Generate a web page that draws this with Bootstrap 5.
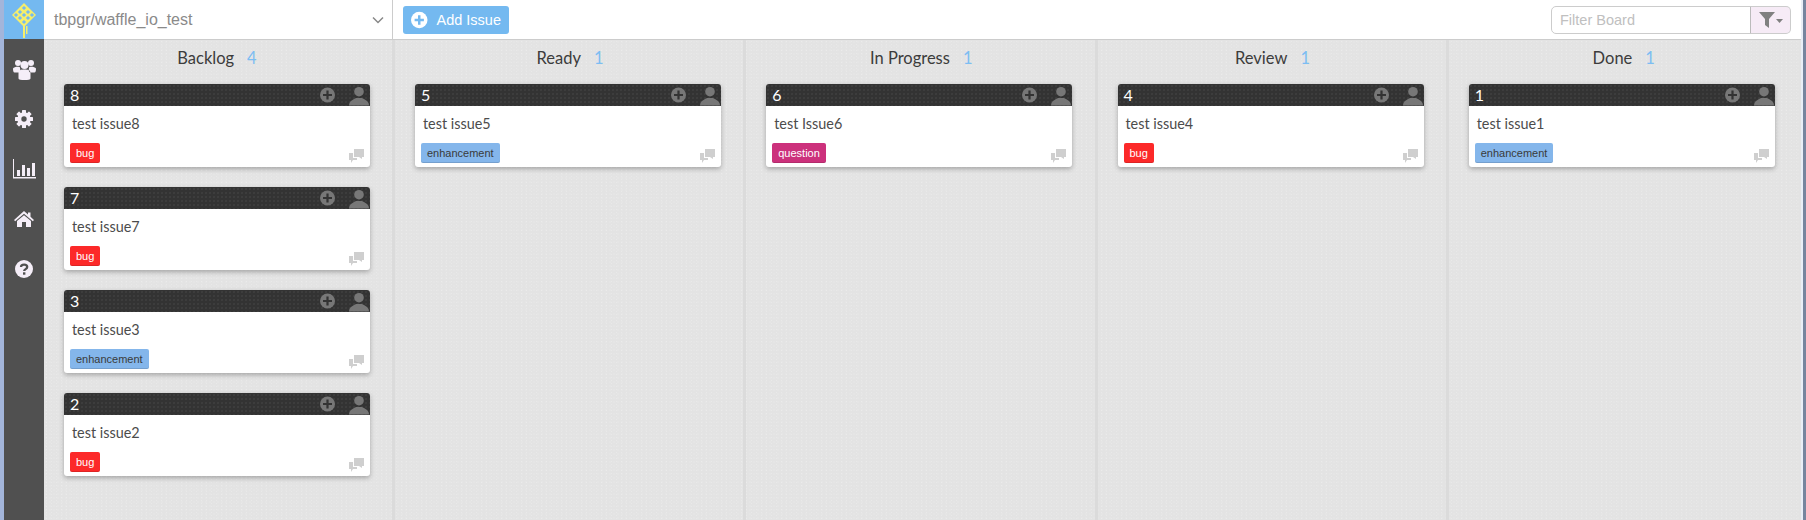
<!DOCTYPE html>
<html lang="en">
<head>
<meta charset="utf-8">
<title>Waffle board</title>
<link rel="stylesheet" href="https://cdn.jsdelivr.net/npm/bootstrap@5.3.0/dist/css/bootstrap.min.css">
<style>
html,body{height:100%;margin:0;overflow:hidden;background:#fff}
body{font-family:"Lato","Liberation Sans",sans-serif;color:#444}
.app-frame{height:520px;width:1806px;border-left:4px solid #a3b5da;border-right:3px solid #76859f;padding-right:2px;background:#e9eef7}
.side-rail{width:40px;background:#505050;flex:none}
.logo-cell{height:39px;background:#74b9f0;margin-bottom:5px}
.rail-item{height:50px;color:#f5eef8}
.top-bar{height:40px;border-bottom:1px solid #ccc;background:#fff}
.repo-pick{width:349px;height:39px;border-right:1px solid #ccc;padding:0 8px 0 10px;font:16px "Liberation Sans",sans-serif;color:#8a8a8a}
.add-btn{height:28px;width:106px;margin-left:10px;padding:0 8px 0 8px;background:#74b9f0;border:0;border-radius:3px;color:#fff;font:14.5px "Liberation Sans",sans-serif;gap:9px;white-space:nowrap}
.add-btn:hover{background:#74b9f0;color:#fff}
.filter-box{width:240px;height:28px;margin-right:10px;flex-wrap:nowrap}
.filter-box .form-control{height:28px;min-height:0;padding:0 6px 0 8px;font:14.5px "Liberation Sans",sans-serif;border:1px solid #ccc;border-radius:5px 0 0 5px;color:#555}
.filter-box .form-control::placeholder{color:#c0c0c0}
.filter-btn{width:41px;height:28px;padding:0;flex:none;background:#f6ebf6;border:1px solid #ccc;border-left-color:#bbb;border-radius:0 5px 5px 0}
.board-area{background-color:#e3e3e3;background-image:radial-gradient(rgba(255,255,255,.28) .5px,transparent .8px),radial-gradient(rgba(255,255,255,.2) .5px,transparent .8px);background-size:4px 4px,5px 3px}
.lane{width:351.25px;flex:none;border-right:3px solid #dbdbdb;padding:0 0 0 20px}
.lane-first{width:351px}
.lane-last{flex:1;border-right:0}
.lane-head{height:44px;font-size:16.5px;color:#3c3c3c;gap:13px;width:306px;padding-bottom:7px}
.lane:not(.lane-first) .lane-head{padding-left:4px}
.lane-count{color:#7cbdf2}
.issue-tile{width:306px;height:83px;margin-bottom:20px;background:#fff;border-radius:3px;box-shadow:0 2px 5px rgba(0,0,0,.28)}
.tile-top{height:22px;background-color:#333;background-image:radial-gradient(rgba(255,255,255,.07) .6px,transparent .9px);background-size:4px 4px;border-radius:3px 3px 0 0;color:#fff;font-size:16px;padding-left:6px}
.tile-num{flex:1;line-height:22px}
.tile-title{font-size:14.4px;color:#4c4c4c;padding:8px 8px 0;line-height:19px;height:37px}
.tile-foot{padding:0 6px}
.tag-chip{height:20px;line-height:20px;padding:0 6px;border-radius:2px;font:11px/20px "Liberation Sans",sans-serif;box-shadow:inset 0 -1px 0 rgba(0,0,0,.12)}
.tag-bug{background:#fc2929;color:#fff}
.tag-enh{background:#84b6eb;color:#3a3a3a}
.tag-que{background:#cc317c;color:#fff}
.note-icon{margin-top:6px}
</style>
</head>
<body>
<svg class="d-none" aria-hidden="true">
  <symbol id="tile-actions" viewBox="0 0 50 22"><circle cx="7.500" cy="11" r="7.500" fill="#777"/><path d="M7.500 6.500v9M3 11h9" stroke="#333" stroke-width="2.200"/><circle cx="39" cy="7.700" r="4.800" fill="#777"/><path d="M29 21.500C29 16.500 34 15.500 36 14H42C44 15.500 49 16.500 49 21.500Z" fill="#777"/></symbol>
  <symbol id="tile-notes" viewBox="0 0 15 14"><path d="M5 0h10v8h-2v2l-3-2H5z" fill="#cfcfcf"/><path d="M0 4h4v5h4v2H4l-2 3v-3H0z" fill="#cfcfcf"/></symbol>
</svg>
<div class="app-frame d-flex">
  <nav class="side-rail d-flex flex-column">
    <div class="logo-cell d-flex align-items-center justify-content-center">
      <svg width="26" height="36" viewBox="0 0 26 36" aria-hidden="true">
        <path d="M13 1 25 13 13 25 1 13Z" fill="#f5ee6b"/>
        <g fill="#74b9f0"><rect x="11.500" y="4.500" width="3" height="3" transform="rotate(45 13 6)"/><rect x="7.500" y="8.500" width="3" height="3" transform="rotate(45 9 10)"/><rect x="15.500" y="8.500" width="3" height="3" transform="rotate(45 17 10)"/><rect x="3.500" y="11.500" width="3" height="3" transform="rotate(45 5 13)"/><rect x="11.500" y="11.500" width="3" height="3" transform="rotate(45 13 13)"/><rect x="19.500" y="11.500" width="3" height="3" transform="rotate(45 21 13)"/><rect x="7.500" y="14.500" width="3" height="3" transform="rotate(45 9 16)"/><rect x="15.500" y="14.500" width="3" height="3" transform="rotate(45 17 16)"/><rect x="11.500" y="18.500" width="3" height="3" transform="rotate(45 13 20)"/></g>
        <path d="M12 24h2v12h-2zM15 24h1.500v8H15z" fill="#f5ee6b"/>
      </svg>
    </div>
    <div class="rail-item d-flex align-items-center justify-content-center">
      <svg width="23" height="21" viewBox="0 0 23 21" fill="currentColor" aria-hidden="true"><circle cx="5" cy="4" r="3"/><circle cx="18" cy="4" r="3"/><circle cx="11.500" cy="6" r="4"/><path d="M0 9.500C1 7.500 7 7.500 7 8.500 7 10 8 12 6 13.500H1.500C.5 13.500 0 12 0 9.500ZM23 9.500C22 7.500 16 7.500 16 8.500 16 10 15 12 17 13.500H21.500C22.500 13.500 23 12 23 9.500ZM5.500 14C5.500 11 8 10.500 11.500 10.500S17.500 11 17.500 14V19.500C17.500 20.500 15 21 11.500 21S5.500 20.500 5.500 19.500Z"/></svg>
    </div>
    <div class="rail-item d-flex align-items-center justify-content-center">
      <svg width="18" height="18" viewBox="0 0 18 18" aria-hidden="true"><circle cx="9" cy="9" r="6.700" fill="currentColor"/><g fill="currentColor"><rect x="7" y="0" width="4" height="18" rx=".6"/><rect x="0" y="7" width="18" height="4" rx=".6"/><rect x="7" y="0" width="4" height="18" rx=".6" transform="rotate(45 9 9)"/><rect x="0" y="7" width="18" height="4" rx=".6" transform="rotate(45 9 9)"/></g><circle cx="9" cy="9" r="2.700" fill="#505050"/></svg>
    </div>
    <div class="rail-item d-flex align-items-center justify-content-center">
      <svg width="24" height="20" viewBox="0 0 24 20" fill="currentColor" aria-hidden="true"><path d="M1 0h1v18h22v1.500H1z"/><path d="M5 11h3v6H5zM10 6h3v11h-3zM15 9h3v8h-3zM20 4h3v13h-3z"/></svg>
    </div>
    <div class="rail-item d-flex align-items-center justify-content-center">
      <svg width="20" height="16" viewBox="0 0 20 16" fill="currentColor" aria-hidden="true"><path d="M10 0 14 3.500V1.500H16.500V5.700L20 9 18.800 10.300 10 2.800 1.200 10.300 0 9Z"/><path d="M10 4.200 17 10V16H12V11H8V16H3V10Z"/></svg>
    </div>
    <div class="rail-item d-flex align-items-center justify-content-center">
      <svg width="18" height="18" viewBox="0 0 18 18" aria-hidden="true"><circle cx="9" cy="9" r="9" fill="currentColor"/><path d="M6 7C6 3.800 12.200 3.800 12.200 7 12.200 9.200 9.200 9 9.200 11" fill="none" stroke="#505050" stroke-width="2.300"/><rect x="8" y="12.300" width="2.400" height="2.400" fill="#505050"/></svg>
    </div>
  </nav>
  <div class="flex-grow-1 d-flex flex-column">
    <header class="top-bar d-flex align-items-center">
      <div class="repo-pick d-flex align-items-center justify-content-between">
        <span>tbpgr/waffle_io_test</span>
        <svg width="12" height="8" viewBox="0 0 12 8" aria-hidden="true"><path d="M1 1.500 6 6.500 11 1.500" fill="none" stroke="#888" stroke-width="1.500"/></svg>
      </div>
      <button class="btn add-btn d-flex align-items-center" type="button">
        <svg width="18" height="18" viewBox="0 0 16 16" aria-hidden="true"><circle cx="8" cy="8" r="8" fill="#fff"/><path d="M8 3.500v9M3.500 8h9" stroke="#74b9f0" stroke-width="2.400"/></svg>
        <span>Add Issue</span>
      </button>
      <div class="input-group filter-box ms-auto">
        <input class="form-control" type="text" placeholder="Filter Board" aria-label="Filter Board">
        <button class="btn filter-btn d-flex align-items-center justify-content-center" type="button" aria-label="Filter">
          <svg width="24" height="16" viewBox="0 0 24 16" aria-hidden="true"><path d="M0 0h16L10 7v9L6 13V7Z" fill="#808080"/><path d="M17 7h7l-3.500 4Z" fill="#808080"/></svg>
        </button>
      </div>
    </header>
    <main class="board-area flex-grow-1 d-flex">
      <section class="lane lane-first">
        <div class="lane-head d-flex align-items-center justify-content-center"><span>Backlog</span><span class="lane-count">4</span></div>
        <article class="issue-tile">
          <div class="tile-top d-flex"><span class="tile-num">8</span><svg width="50" height="22" aria-hidden="true"><use href="#tile-actions"/></svg></div>
          <div class="tile-title">test issue8</div>
          <div class="tile-foot d-flex justify-content-between align-items-start"><span class="tag-chip tag-bug">bug</span><svg class="note-icon" width="15" height="14" aria-hidden="true"><use href="#tile-notes"/></svg></div>
        </article>
        <article class="issue-tile">
          <div class="tile-top d-flex"><span class="tile-num">7</span><svg width="50" height="22" aria-hidden="true"><use href="#tile-actions"/></svg></div>
          <div class="tile-title">test issue7</div>
          <div class="tile-foot d-flex justify-content-between align-items-start"><span class="tag-chip tag-bug">bug</span><svg class="note-icon" width="15" height="14" aria-hidden="true"><use href="#tile-notes"/></svg></div>
        </article>
        <article class="issue-tile">
          <div class="tile-top d-flex"><span class="tile-num">3</span><svg width="50" height="22" aria-hidden="true"><use href="#tile-actions"/></svg></div>
          <div class="tile-title">test issue3</div>
          <div class="tile-foot d-flex justify-content-between align-items-start"><span class="tag-chip tag-enh">enhancement</span><svg class="note-icon" width="15" height="14" aria-hidden="true"><use href="#tile-notes"/></svg></div>
        </article>
        <article class="issue-tile">
          <div class="tile-top d-flex"><span class="tile-num">2</span><svg width="50" height="22" aria-hidden="true"><use href="#tile-actions"/></svg></div>
          <div class="tile-title">test issue2</div>
          <div class="tile-foot d-flex justify-content-between align-items-start"><span class="tag-chip tag-bug">bug</span><svg class="note-icon" width="15" height="14" aria-hidden="true"><use href="#tile-notes"/></svg></div>
        </article>
      </section>
      <section class="lane">
        <div class="lane-head d-flex align-items-center justify-content-center"><span>Ready</span><span class="lane-count">1</span></div>
        <article class="issue-tile">
          <div class="tile-top d-flex"><span class="tile-num">5</span><svg width="50" height="22" aria-hidden="true"><use href="#tile-actions"/></svg></div>
          <div class="tile-title">test issue5</div>
          <div class="tile-foot d-flex justify-content-between align-items-start"><span class="tag-chip tag-enh">enhancement</span><svg class="note-icon" width="15" height="14" aria-hidden="true"><use href="#tile-notes"/></svg></div>
        </article>
      </section>
      <section class="lane">
        <div class="lane-head d-flex align-items-center justify-content-center"><span>In Progress</span><span class="lane-count">1</span></div>
        <article class="issue-tile">
          <div class="tile-top d-flex"><span class="tile-num">6</span><svg width="50" height="22" aria-hidden="true"><use href="#tile-actions"/></svg></div>
          <div class="tile-title">test Issue6</div>
          <div class="tile-foot d-flex justify-content-between align-items-start"><span class="tag-chip tag-que">question</span><svg class="note-icon" width="15" height="14" aria-hidden="true"><use href="#tile-notes"/></svg></div>
        </article>
      </section>
      <section class="lane">
        <div class="lane-head d-flex align-items-center justify-content-center"><span>Review</span><span class="lane-count">1</span></div>
        <article class="issue-tile">
          <div class="tile-top d-flex"><span class="tile-num">4</span><svg width="50" height="22" aria-hidden="true"><use href="#tile-actions"/></svg></div>
          <div class="tile-title">test issue4</div>
          <div class="tile-foot d-flex justify-content-between align-items-start"><span class="tag-chip tag-bug">bug</span><svg class="note-icon" width="15" height="14" aria-hidden="true"><use href="#tile-notes"/></svg></div>
        </article>
      </section>
      <section class="lane lane-last">
        <div class="lane-head d-flex align-items-center justify-content-center"><span>Done</span><span class="lane-count">1</span></div>
        <article class="issue-tile">
          <div class="tile-top d-flex"><span class="tile-num">1</span><svg width="50" height="22" aria-hidden="true"><use href="#tile-actions"/></svg></div>
          <div class="tile-title">test issue1</div>
          <div class="tile-foot d-flex justify-content-between align-items-start"><span class="tag-chip tag-enh">enhancement</span><svg class="note-icon" width="15" height="14" aria-hidden="true"><use href="#tile-notes"/></svg></div>
        </article>
      </section>
    </main>
  </div>
</div>
</body>
</html>
